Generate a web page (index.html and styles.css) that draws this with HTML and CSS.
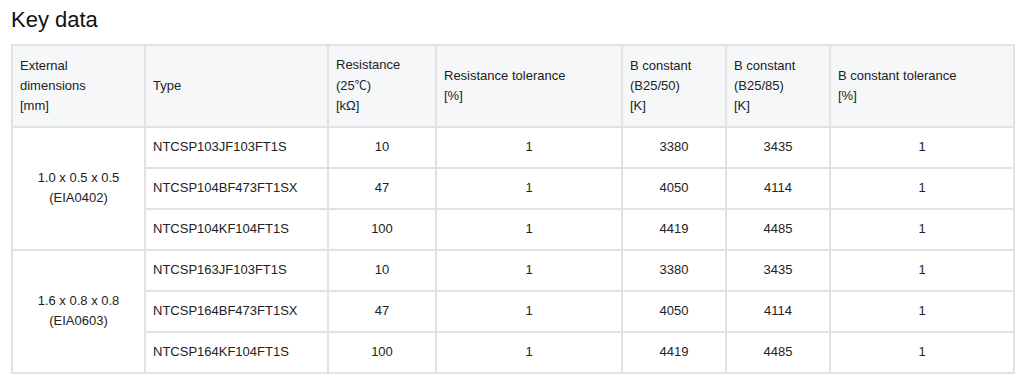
FILE: index.html
```html
<!DOCTYPE html>
<html lang="en">
<head>
<meta charset="utf-8">
<title>Key data</title>
<link rel="stylesheet" href="styles.css">
</head>
<body>
<h2 class="title">Key data</h2>
<table class="data">
  <colgroup>
    <col class="c1"><col class="c2"><col class="c3"><col class="c4"><col class="c5"><col class="c6"><col class="c7">
  </colgroup>
  <thead>
    <tr>
      <th>External<br>dimensions<br>[mm]</th>
      <th>Type</th>
      <th>Resistance<br>(25<span class="deg">℃</span>)<br>[kΩ]</th>
      <th>Resistance tolerance<br>[%]</th>
      <th>B constant<br>(B25/50)<br>[K]</th>
      <th>B constant<br>(B25/85)<br>[K]</th>
      <th>B constant tolerance<br>[%]</th>
    </tr>
  </thead>
  <tbody>
    <tr>
      <td rowspan="3" class="ctr">1.0 x 0.5 x 0.5<br>(EIA0402)</td>
      <td>NTCSP103JF103FT1S</td>
      <td class="ctr">10</td><td class="ctr">1</td><td class="ctr">3380</td><td class="ctr">3435</td><td class="ctr">1</td>
    </tr>
    <tr>
      <td>NTCSP104BF473FT1SX</td>
      <td class="ctr">47</td><td class="ctr">1</td><td class="ctr">4050</td><td class="ctr">4114</td><td class="ctr">1</td>
    </tr>
    <tr>
      <td>NTCSP104KF104FT1S</td>
      <td class="ctr">100</td><td class="ctr">1</td><td class="ctr">4419</td><td class="ctr">4485</td><td class="ctr">1</td>
    </tr>
    <tr>
      <td rowspan="3" class="ctr">1.6 x 0.8 x 0.8<br>(EIA0603)</td>
      <td>NTCSP163JF103FT1S</td>
      <td class="ctr">10</td><td class="ctr">1</td><td class="ctr">3380</td><td class="ctr">3435</td><td class="ctr">1</td>
    </tr>
    <tr>
      <td>NTCSP164BF473FT1SX</td>
      <td class="ctr">47</td><td class="ctr">1</td><td class="ctr">4050</td><td class="ctr">4114</td><td class="ctr">1</td>
    </tr>
    <tr>
      <td>NTCSP164KF104FT1S</td>
      <td class="ctr">100</td><td class="ctr">1</td><td class="ctr">4419</td><td class="ctr">4485</td><td class="ctr">1</td>
    </tr>
  </tbody>
</table>
</body>
</html>
```
FILE: styles.css
```css
html, body {
  margin: 0;
  background: #ffffff;
}
body {
  padding: 7px 11px 0 11px;
  font-family: "Liberation Sans", Arial, sans-serif;
  color: #222222;
}
.title {
  margin: 0 0 12px 0;
  font-size: 22px;
  font-weight: normal;
  line-height: 25px;
  color: #111111;
}
.data {
  border-collapse: collapse;
  table-layout: fixed;
  width: 1002px;
  font-size: 13px;
  line-height: 20px;
}
.c1 { width: 133px; }
.c2 { width: 183px; }
.c3 { width: 108px; }
.c4 { width: 186px; }
.c5 { width: 104px; }
.c6 { width: 104px; }
.c7 { width: 184px; }
.data th,
.data td {
  border: 2px solid #e2e2e2;
  padding: 9px 7px 10px 7px;
  vertical-align: middle;
}
.data th {
  background: #f6f7f8;
  font-weight: normal;
  text-align: left;
  padding: 9px 7px 10px 7px;
}
.data td {
  text-align: left;
}
.data td.ctr {
  text-align: center;
}
.deg {
  font-family: "Noto Sans CJK JP", "Liberation Serif", serif;
  font-size: 12px;
}
```
